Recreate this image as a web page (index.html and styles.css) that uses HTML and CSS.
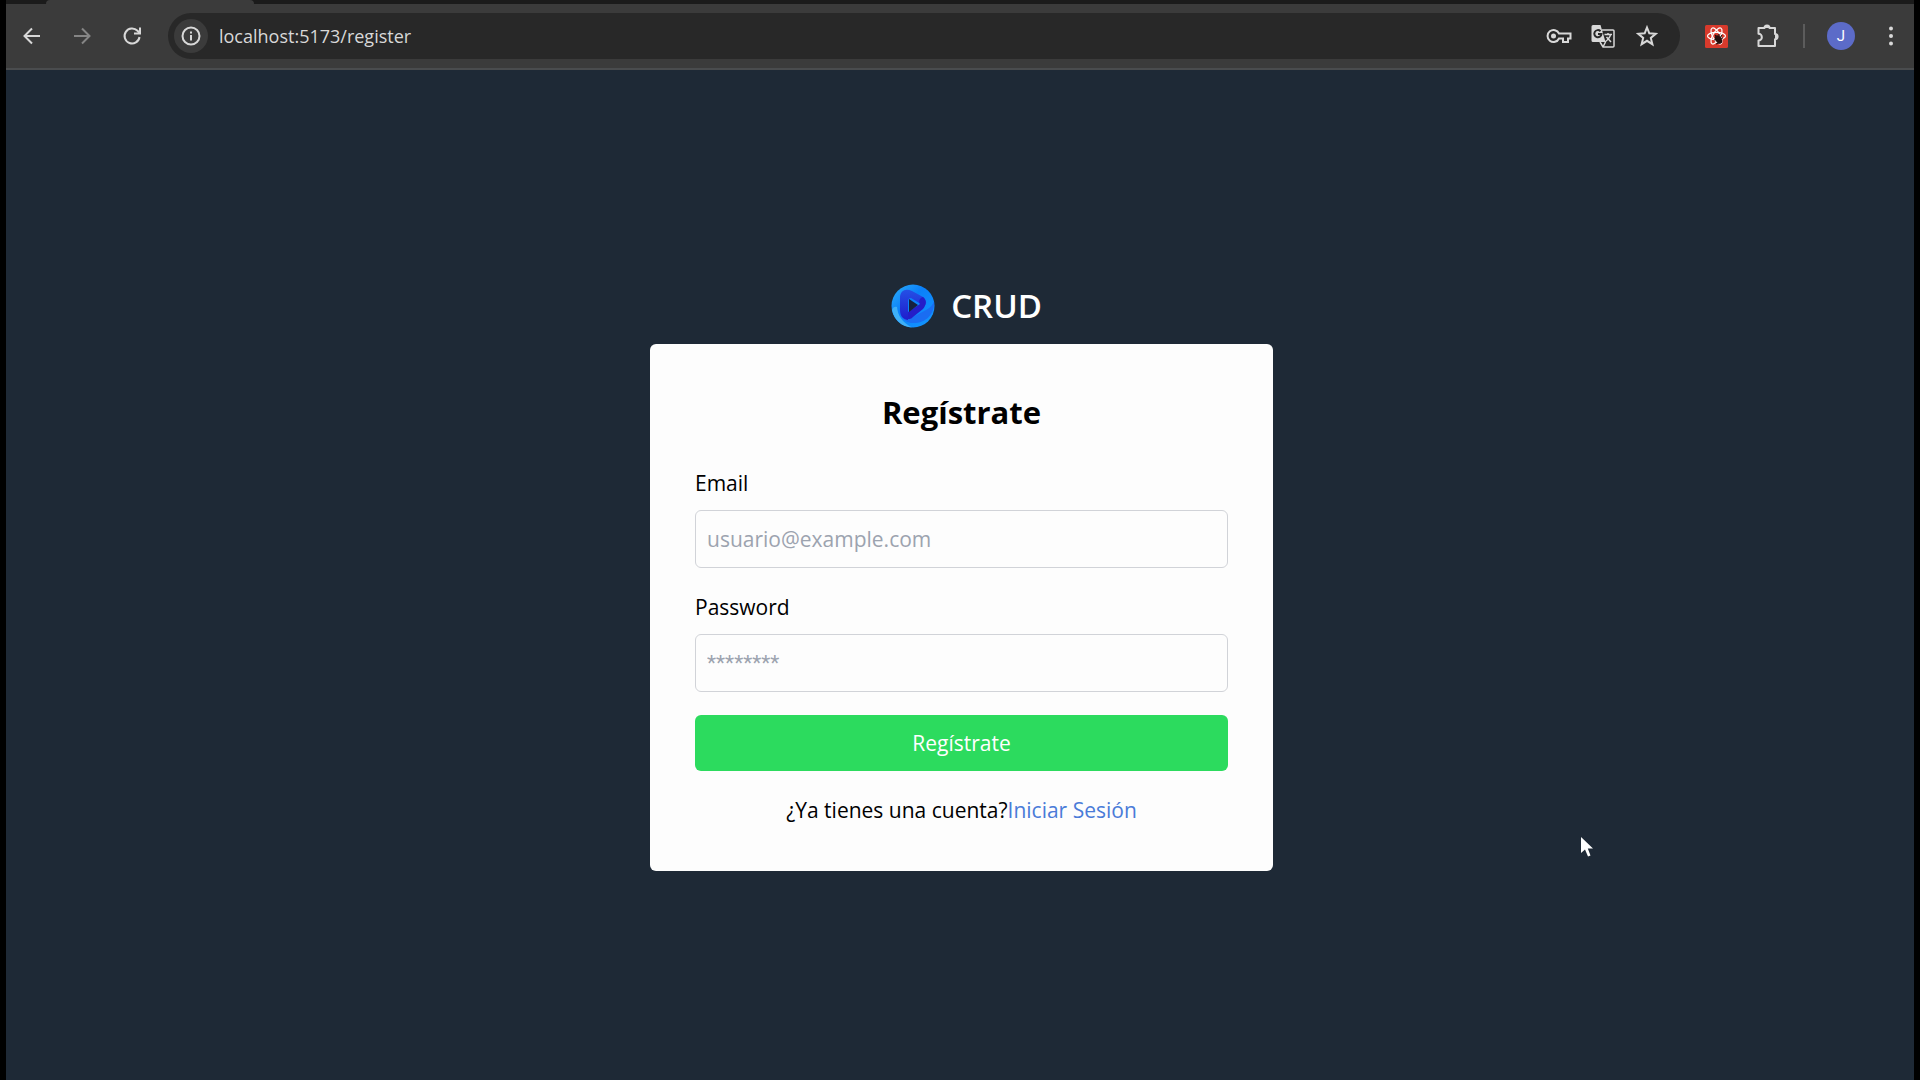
FILE: index.html
```html
<!DOCTYPE html>
<html lang="es">
<head>
<meta charset="utf-8">
<title>CRUD - Regístrate</title>
<link rel="stylesheet" href="styles.css">
</head>
<body>
<div class="window">
  <div class="tab-strip"><div class="tab"></div></div>
  <header class="toolbar">
    <nav class="nav-buttons">
      <button class="icon-button" aria-label="Atrás"><svg width="20" height="20" viewBox="0 0 20 20"><path d="M18 10H3M10 2.500L2.500 10L10 17.500"/></svg></button>
      <button class="icon-button dim" aria-label="Adelante"><svg width="20" height="20" viewBox="0 0 20 20"><path d="M2 10H17M10 2.500L17.500 10L10 17.500"/></svg></button>
      <button class="icon-button" aria-label="Recargar"><svg width="20" height="20" viewBox="0 0 20 20"><path d="M17.500 11A7.500 7.500 0 1 1 15.500 4.800L17.500 7"/><path d="M18 1.500V7.500H12"/></svg></button>
    </nav>
    <div class="omnibox">
      <button class="site-info" aria-label="Información del sitio"><svg width="20" height="20" viewBox="0 0 20 20"><circle cx="10" cy="10" r="8.500"/><path d="M10 9V14.500M10 5.500V7.500"/></svg></button>
      <input class="address" type="text" value="localhost:5173/register" aria-label="Dirección">
      <div class="omnibox-actions">
        <button class="small-button" aria-label="Contraseñas"><svg width="26" height="16" viewBox="0 0 26 16"><path d="M13 5.500A6 6 0 1 0 13 10.500H17V14H22V10.500H24.500V5.500Z"/><circle class="solid" cx="7.500" cy="8" r="2.500"/></svg></button>
        <button class="small-button" aria-label="Traducir"><svg width="24" height="24" viewBox="0 0 24 24"><path d="M11 6H22A1 1 0 0 1 23 7V22A1 1 0 0 1 22 23H12L9 18" stroke-width="1.500"/><path class="solid" d="M2 1H9.500L14.500 18H2A1.500 1.500 0 0 1 .5 16.500V2.500A1.500 1.500 0 0 1 2 1Z"/><path class="cut" d="M9.500 7.200A3.600 3.600 0 1 0 10.500 10H7"/><path d="M13.500 10.500H21M17 9V10.500M19.500 10.500C19 14 16.500 16 14 18M15.500 13L20 18M12 23L14.500 18" stroke-width="1.500"/></svg></button>
        <button class="small-button" aria-label="Favoritos"><svg width="22" height="22" viewBox="0 0 22 22"><path d="M11 2.500L13.300 8.300L19.700 8.800L14.800 12.900L16.400 19.200L11 15.800L5.600 19.200L7.200 12.900L2.300 8.800L8.700 8.300Z"/></svg></button>
      </div>
    </div>
    <div class="extensions">
      <button class="icon-button" aria-label="React Developer Tools"><svg class="react" width="23" height="23" viewBox="0 0 23 23"><rect width="23" height="23" rx="1.500" fill="#d83a2c"/><g fill="none" stroke="#fff" stroke-width="1.200"><ellipse cx="11.500" cy="11" rx="9" ry="3.700"/><ellipse cx="11.500" cy="11" rx="9" ry="3.700" transform="rotate(60 11.500 11)"/><ellipse cx="11.500" cy="11" rx="9" ry="3.700" transform="rotate(120 11.500 11)"/></g><ellipse cx="13.500" cy="14.500" rx="3" ry="4.500" transform="rotate(-35 13.500 14.500)" fill="#26110f"/><path d="M10 10L12 12M9 15L18 13M11 19L17 17M14 9L14 12M17 10L15 13" stroke="#26110f" stroke-width="1.200"/></svg></button>
      <button class="icon-button" aria-label="Extensiones"><svg width="24" height="24" viewBox="0 0 24 24"><path d="M2.500 4H8.500A2.200 2.200 0 0 1 13.500 4H19V10A2.500 2.500 0 0 1 19 15.200V22H2.500V16.500A3.300 3.300 0 0 0 2.500 9.800Z" stroke-linejoin="round"/><path class="solid" d="M8.500 4A2.500 3 0 0 1 13.500 4ZM19 10A3 2.600 0 0 1 19 15.200Z"/></svg></button>
    </div>
    <div class="divider"></div>
    <button class="avatar" aria-label="Perfil">J</button>
    <button class="menu" aria-label="Menú"><svg width="6" height="20" viewBox="0 0 6 20"><circle class="solid" cx="3" cy="2.500" r="2"/><circle class="solid" cx="3" cy="10" r="2"/><circle class="solid" cx="3" cy="17.500" r="2"/></svg></button>
  </header>
  <main class="page">
    <div class="brand">
      <svg width="44" height="44" viewBox="0 0 44 44" aria-hidden="true">
        <defs>
          <linearGradient id="ring" x1="0" y1="0" x2="1" y2="1"><stop offset="0" stop-color="#2fb0f8"/><stop offset=".4" stop-color="#0a80fa"/><stop offset="1" stop-color="#1598ff"/></linearGradient>
          <linearGradient id="fold" x1="0" y1="0" x2="0" y2="1"><stop offset="0" stop-color="#2450e6"/><stop offset="1" stop-color="#1f1ccc"/></linearGradient>
        </defs>
        <circle cx="22" cy="22" r="21.500" fill="url(#ring)"/>
        <path d="M1 26C3 36 11 43 21 43.500C11 38 7 32 6 23C4 22 2 23 1 26Z" fill="#3fb0f7"/>
        <path d="M43 17C44 31 34 40 20 39C15 38 11 35 9 30L20 34L35 26C39 24 42 21 43 17Z" fill="#1a6df2"/>
        <path d="M9 14C9 6 15 4 21 7L32 13C36 16 36 20 33 22L20 14Q17 14 17 18V36C11 35 9 31 9 26Z" fill="url(#fold)"/>
        <path d="M17 35V28L29 20C27 17 29 14 32 13C36 16 35 22 32 25L22 33C20 35 19 35 17 35Z" fill="#241dc8"/>
        <path d="M18 15L27 21L18 28Z" fill="#16213d"/>
      </svg>
      <span class="brand-name">CRUD</span>
    </div>
    <section class="card">
      <h1 class="title">Regístrate</h1>
      <form class="form">
        <div class="field">
          <label for="email">Email</label>
          <input class="text-input" id="email" type="email" placeholder="usuario@example.com">
        </div>
        <div class="field">
          <label for="password">Password</label>
          <input class="text-input masked" id="password" type="password" placeholder="********">
        </div>
        <button class="submit" type="button">Regístrate</button>
      </form>
      <p class="login-hint">¿Ya tienes una cuenta?<a href="#login">Iniciar Sesión</a></p>
    </section>
  </main>
  <svg class="cursor" width="15" height="22" viewBox="0 0 15 22" aria-hidden="true"><path d="M1 1V17L5 13.500L8 20.500L10.500 19.500L7.800 12.500H13Z" fill="#fff"/></svg>
</div>
</body>
</html>
```
FILE: styles.css
```css
*, *::before, *::after {
  box-sizing: border-box;
}

body {
  margin: 0;
  background: #000;
  font-family: "Open Sans", "Noto Sans", sans-serif;
  font-size: 21px;
  line-height: 32px;
  color: #000;
}

button, input {
  font: inherit;
  color: inherit;
  border: 0;
  padding: 0;
  margin: 0;
  background: none;
}

svg {
  display: block;
  fill: none;
  stroke: currentColor;
  stroke-width: 2;
}

.solid {
  fill: currentColor;
  stroke: none;
}

.window {
  position: relative;
  display: flex;
  flex-direction: column;
  min-height: 100vh;
  margin: 0 6px;
}

.tab-strip {
  height: 4px;
  padding-left: 40px;
  background: #1b1b1b;
}

.tab {
  width: 208px;
  height: 4px;
  border-radius: 4px 4px 0 0;
  background: #3b3b3b;
}

.toolbar {
  display: flex;
  align-items: center;
  height: 66px;
  padding: 0 11px 0 6px;
  background: #3b3b3b;
  border-bottom: 2px solid #4a4c4e;
  color: #d8d8d8;
}

.nav-buttons {
  display: flex;
  gap: 10px;
  margin-right: 16px;
}

.icon-button {
  display: grid;
  place-items: center;
  width: 40px;
  height: 40px;
}

.dim {
  color: #858585;
}

.omnibox {
  display: flex;
  flex: 1;
  align-items: center;
  height: 46px;
  padding: 0 19px 0 6px;
  border-radius: 23px;
  background: #282828;
}

.site-info {
  display: grid;
  place-items: center;
  width: 34px;
  height: 34px;
  border-radius: 50%;
  background: #3b3b3b;
}

.address {
  flex: 1;
  min-width: 0;
  margin-left: 11px;
  font-size: 18px;
  outline: none;
}

.omnibox-actions {
  display: flex;
  gap: 16px;
}

.small-button {
  display: grid;
  place-items: center;
  width: 28px;
  height: 28px;
}

.cut {
  stroke: #282828;
}

.react {
  stroke: none;
}

.extensions {
  display: flex;
  gap: 12px;
  margin: 0 15px 0 16px;
}

.divider {
  width: 2px;
  height: 24px;
  background: #5c5c5c;
}

.avatar {
  width: 28px;
  height: 28px;
  margin: 0 24px 0 22px;
  border-radius: 50%;
  background: #5c6bc8;
  color: #fff;
  font-family: Roboto, sans-serif;
  font-size: 15px;
  line-height: 28px;
}

.menu {
  display: grid;
  place-items: center;
  width: 24px;
  height: 40px;
}

.page {
  display: flex;
  flex: 1;
  flex-direction: column;
  align-items: center;
  justify-content: center;
  padding: 28px 24px 24px 27px;
  background: #1e2936;
}

.brand {
  display: flex;
  align-items: center;
  gap: 16px;
  margin-bottom: 16px;
  padding-left: 10px;
}

.brand svg {
  stroke: none;
}

.brand-name {
  font-size: 33px;
  line-height: 44px;
  font-weight: 600;
  color: #fff;
}

.card {
  width: 100%;
  max-width: 623px;
  padding: 45px;
  border-radius: 6px;
  background: #fdfdfd;
}

.title {
  margin: 0 0 32px;
  font-size: 31px;
  line-height: 46px;
  font-weight: 700;
  text-align: center;
}

.form {
  display: flex;
  flex-direction: column;
  gap: 23px;
}

.field {
  display: flex;
  flex-direction: column;
  gap: 11px;
}

.text-input {
  width: 100%;
  height: 58px;
  padding: 0 11px;
  border: 1px solid #d1d3d8;
  border-radius: 6px;
}

.masked {
  font-family: Roboto, sans-serif;
}

.text-input::placeholder {
  color: #9ca3af;
  opacity: 1;
}

.submit {
  height: 56px;
  border-radius: 6px;
  background: #2cdb5e;
  color: #fff;
}

.login-hint {
  margin: 23px 0 0;
  text-align: center;
}

.login-hint a {
  color: #4a7bd8;
  text-decoration: none;
}

.cursor {
  position: absolute;
  left: 82.5%;
  top: 77.4%;
  stroke: none;
}
```
